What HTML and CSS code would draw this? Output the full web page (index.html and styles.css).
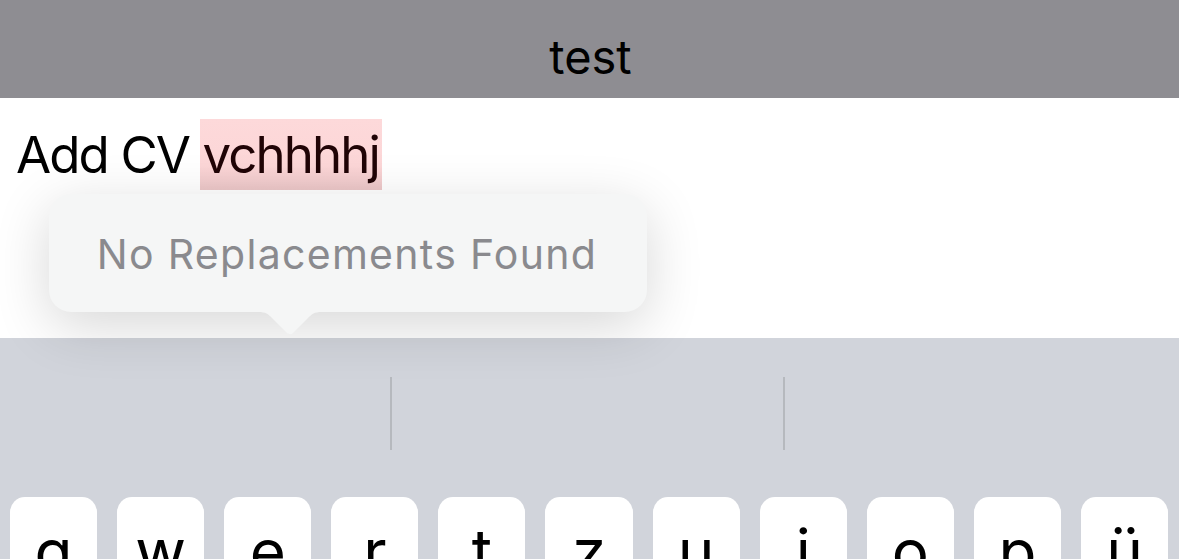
FILE: index.html
```html
<!DOCTYPE html>
<html lang="de">
<head>
<meta charset="utf-8">
<title>test</title>
<link rel="stylesheet" href="styles.css">
</head>
<body>
<div class="screen">
  <header class="navbar"><span class="title">test</span></header>
  <main class="content">
    <p class="line">Add CV <span class="misspelled">vchhhhj</span></p>
    <div class="popup">
      <span class="popup-text">No Replacements Found</span>
      <svg class="popup-arrow" width="64" height="24" viewBox="0 0 64 24" aria-hidden="true">
        <path d="M0 0 C8 0 10 2 14 6 L29 21 C30.5 22.6 33.5 22.6 35 21 L50 6 C54 2 56 0 64 0 Z" fill="#f5f6f6"/>
      </svg>
    </div>
  </main>
  <section class="keyboard">
    <div class="suggestions">
      <div class="slot"></div>
      <div class="divider"></div>
      <div class="slot"></div>
      <div class="divider"></div>
      <div class="slot"></div>
    </div>
    <div class="row">
      <div class="key">q</div>
      <div class="key">w</div>
      <div class="key">e</div>
      <div class="key">r</div>
      <div class="key">t</div>
      <div class="key">z</div>
      <div class="key">u</div>
      <div class="key">i</div>
      <div class="key">o</div>
      <div class="key">p</div>
      <div class="key">ü</div>
    </div>
  </section>
</div>
</body>
</html>
```

FILE: styles.css
```css
html, body {
  margin: 0;
  padding: 0;
}

body {
  width: 1179px;
  height: 559px;
  overflow: hidden;
  font-family: Inter, "Liberation Sans", sans-serif;
  background: #ffffff;
}

.screen {
  display: flex;
  flex-direction: column;
  height: 559px;
  overflow: hidden;
}

.navbar {
  height: 98px;
  flex: none;
  background: #8e8d92;
  display: flex;
  align-items: center;
  justify-content: center;
}

.title {
  font-size: 47px;
  color: #000;
  line-height: 1;
  padding-top: 14px;
  padding-left: 2px;
}

.content {
  position: relative;
  height: 240px;
  flex: none;
  background: #ffffff;
}

.line {
  margin: 0;
  padding: 21px 0 0 16px;
  font-size: 51px;
  line-height: 71px;
  letter-spacing: -1.9px;
  color: #000;
}

.misspelled {
  display: inline-block;
  background: linear-gradient(#fdd9da, #fcd6d7 65%, #ecc7c8);
  color: #200406;
  padding: 0 3px 0 2px;
  margin-left: -1px;
}

.popup {
  position: absolute;
  left: 49px;
  top: 96px;
  width: 598px;
  height: 118px;
  background: #f5f6f6;
  border-radius: 22px;
  box-shadow: 0 14px 56px rgba(0, 0, 0, 0.16);
  display: flex;
  align-items: center;
  justify-content: center;
}

.popup-text {
  font-size: 41px;
  letter-spacing: 1.3px;
  color: #8a8a8e;
  padding-top: 2px;
  padding-right: 2px;
}

.popup-arrow {
  position: absolute;
  left: 209px;
  top: 118px;
  display: block;
}

.keyboard {
  flex: 1;
  background: #d1d4db;
  display: flex;
  flex-direction: column;
  overflow: hidden;
}

.suggestions {
  height: 159px;
  flex: none;
  display: grid;
  grid-template-columns: 390px 2px 391px 2px 1fr;
  align-items: center;
}

.divider {
  width: 2px;
  height: 73px;
  background: #b6b9be;
  margin-top: -8px;
}

.row {
  display: flex;
  gap: 20px;
  padding: 0 11px 0 10px;
}

.key {
  flex: 1;
  height: 62px;
  background: #ffffff;
  border-radius: 15px 15px 0 0;
  font-size: 62px;
  line-height: 1;
  color: #000;
  text-align: center;
  padding-top: 24px;
  box-sizing: border-box;
  overflow: hidden;
}
```
